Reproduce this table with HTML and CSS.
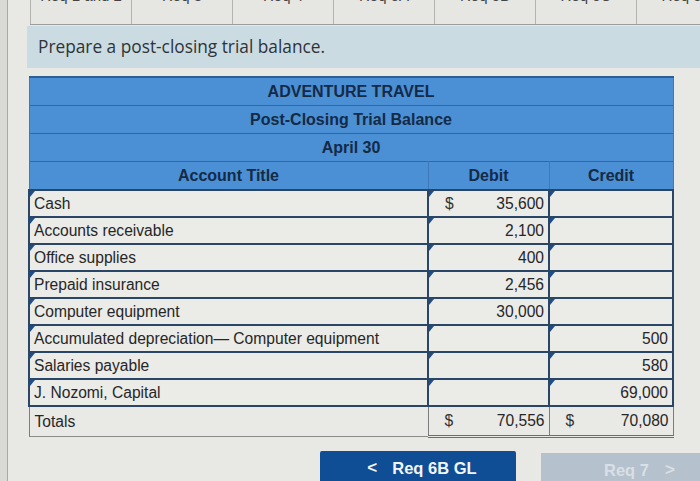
FILE: index.html
```html
<!DOCTYPE html>
<html>
<head>
<meta charset="utf-8">
<link rel="stylesheet" href="styles.css">
</head>
<body>
<div class="screen">
  <div class="tabs">
    <div class="tab"><span>Req 1 and 2</span></div>
    <div class="tab"><span>Req 3</span></div>
    <div class="tab"><span>Req 4</span></div>
    <div class="tab"><span>Req 5A</span></div>
    <div class="tab"><span>Req 5B</span></div>
    <div class="tab"><span>Req 5C</span></div>
    <div class="tab"><span>Req 5D</span></div>
  </div>
  <div class="prompt">Prepare a post-closing trial balance.</div>
  <table class="tb">
    <colgroup><col class="c1"><col class="c2"><col class="c3"></colgroup>
    <tr class="h"><th colspan="3">ADVENTURE TRAVEL</th></tr>
    <tr class="h"><th colspan="3">Post-Closing Trial Balance</th></tr>
    <tr class="h"><th colspan="3">April 30</th></tr>
    <tr class="h cols"><th>Account Title</th><th class="cd">Debit</th><th class="cc">Credit</th></tr>
    <tr class="d"><td class="acct"><i class="mk"></i>Cash</td><td class="num"><i class="mk"></i><div class="val"><span class="cur">$</span><span>35,600</span></div></td><td class="num"><i class="mk"></i><div class="val"></div></td></tr>
    <tr class="d"><td class="acct"><i class="mk"></i>Accounts receivable</td><td class="num"><i class="mk"></i><div class="val"><span></span><span>2,100</span></div></td><td class="num"><i class="mk"></i><div class="val"></div></td></tr>
    <tr class="d"><td class="acct"><i class="mk"></i>Office supplies</td><td class="num"><i class="mk"></i><div class="val"><span></span><span>400</span></div></td><td class="num"><i class="mk"></i><div class="val"></div></td></tr>
    <tr class="d"><td class="acct"><i class="mk"></i>Prepaid insurance</td><td class="num"><i class="mk"></i><div class="val"><span></span><span>2,456</span></div></td><td class="num"><i class="mk"></i><div class="val"></div></td></tr>
    <tr class="d"><td class="acct"><i class="mk"></i>Computer equipment</td><td class="num"><i class="mk"></i><div class="val"><span></span><span>30,000</span></div></td><td class="num"><i class="mk"></i><div class="val"></div></td></tr>
    <tr class="d"><td class="acct"><i class="mk"></i>Accumulated depreciation— Computer equipment</td><td class="num"><i class="mk"></i><div class="val"></div></td><td class="num"><i class="mk"></i><div class="val"><span></span><span>500</span></div></td></tr>
    <tr class="d"><td class="acct"><i class="mk"></i>Salaries payable</td><td class="num"><i class="mk"></i><div class="val"></div></td><td class="num"><i class="mk"></i><div class="val"><span></span><span>580</span></div></td></tr>
    <tr class="d"><td class="acct"><i class="mk"></i>J. Nozomi, Capital</td><td class="num"><i class="mk"></i><div class="val"></div></td><td class="num"><i class="mk"></i><div class="val"><span></span><span>69,000</span></div></td></tr>
    <tr class="t"><td class="acct">Totals</td><td class="num tot"><div class="val"><span class="cur">$</span><span>70,556</span></div></td><td class="num tot"><div class="val"><span class="cur">$</span><span>70,080</span></div></td></tr>
  </table>
  <div class="nav">
    <button class="btn prev"><span class="chev">&lt;</span>Req 6B GL</button>
    <button class="btn next">Req 7<span class="chev">&gt;</span></button>
  </div>
</div>
</body>
</html>
```

FILE: styles.css
```css
html, body {
  margin: 0;
  padding: 0;
}
body {
  background: #d9d9d5;
  font-family: "Liberation Sans", Arial, sans-serif;
  width: 700px;
  height: 481px;
  overflow: hidden;
}
.screen {
  margin-left: 7px;
  border-left: 1px solid #a9a9a6;
  background: #e8e8e4;
  height: 481px;
}
.tabs {
  display: flex;
  margin-left: 22px;
  height: 24px;
  border-bottom: 1px solid #9c9c9a;
}
.tab {
  flex: 0 0 100px;
  border-left: 1px solid #b3b3b0;
  background: #e6e6e2;
  overflow: hidden;
  text-align: center;
  color: #444;
  font-size: 15px;
}
.tab span {
  display: block;
  line-height: 16px;
  margin-top: -12px;
}
.prompt {
  margin: 1px 0 0 19px;
  height: 42px;
  line-height: 42px;
  padding-left: 11px;
  background: #cbdbe2;
  font-family: "Open Sans", sans-serif;
  font-size: 17.3px;
  color: #2e3338;
}
.tb {
  margin: 8px 0 0 20px;
  width: 644px;
  border-collapse: collapse;
  table-layout: fixed;
  font-size: 15.6px;
  color: #262626;
}
.c1 { width: 399px; }
.c2 { width: 121px; }
.c3 { width: 124px; }
.h th {
  background: #4b8fd5;
  height: 27px;
  padding: 0;
  border-top: 1.5px solid #2f68a3;
  font-weight: bold;
  color: #142a45;
  font-size: 16px;
  text-align: center;
}
.h:first-child th { border-top: 2px solid #2b5f96; }
.tb .h th { border-left: 1px solid #3d79b8; border-right: 1px solid #3d79b8; }
.cols th.cd, .cols th.cc { border-left: 1.5px solid #2f5f90; }
.d td {
  position: relative;
  height: 25px;
  padding: 0;
  background: #ebebe8;
  border-top: 2.5px solid #2a4666;
  border-left: 2px solid #2a4666;
  border-right: 2px solid #2a4666;
  vertical-align: middle;
}
.acct {
  padding-left: 4px !important;
  white-space: nowrap;
}
.val {
  display: flex;
  justify-content: space-between;
  padding: 0 4px 0 14px;
}
td.num .val { padding-left: 16px; }
.mk {
  position: absolute;
  left: 0;
  top: 0;
  width: 0;
  height: 0;
  border-top: 6px solid #1f4e86;
  border-right: 5px solid transparent;
}
.t td {
  height: 28px;
  padding: 0;
  background: #e9e9e6;
  border-top: 2.5px solid #2a4666;
  border-left: 1px solid #7c7c7c;
  border-right: 1px solid #7c7c7c;
  border-bottom: 1px solid #8a8a8a;
}
.t td.acct { padding-left: 5px !important; }
.t td.tot { border-bottom: 3px double #6d6d6d; }
.cur { color: #333; }
.nav {
  display: flex;
  align-items: flex-start;
  gap: 25px;
  margin: 13px 0 0 312px;
}
.btn {
  flex: 0 0 auto;
  font-family: "Liberation Sans", Arial, sans-serif;
  font-weight: bold;
  font-size: 16.5px;
  border: 0;
  height: 34px;
  padding: 0;
  display: flex;
  align-items: center;
  justify-content: center;
}
.prev {
  width: 196px;
  background: #0f4e95;
  color: #f2f5fa;
  border-radius: 2px 2px 0 0;
  padding-left: 8px;
}
.prev .chev { margin-right: 15px; font-size: 17px; }
.next {
  width: 170px;
  margin-top: 2px;
  background: #b5c1cd;
  color: #d9dfe6;
  justify-content: flex-start;
  padding-left: 63px;
}
.next .chev { margin-left: 16px; font-size: 17px; }
```
